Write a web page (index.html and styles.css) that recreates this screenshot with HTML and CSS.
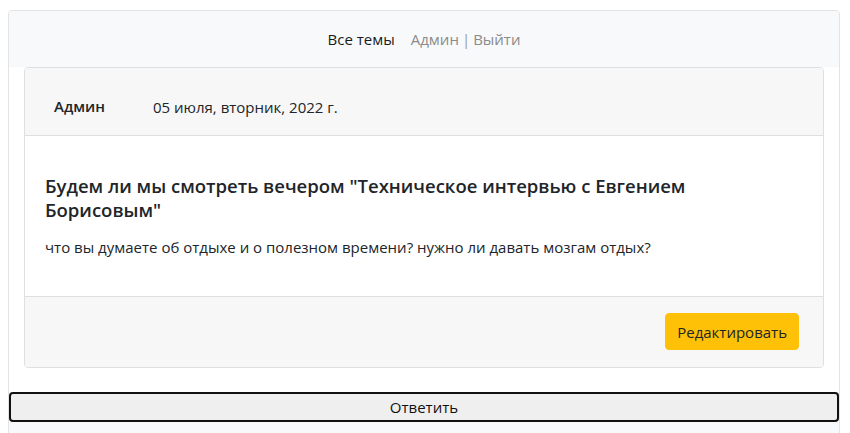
FILE: index.html
```html
<!DOCTYPE html>
<html lang="ru">
<head>
<meta charset="utf-8">
<title>Тема</title>
<link rel="stylesheet" href="styles.css">
</head>
<body>
<div class="page">
  <nav class="navbar">
    <a class="nav-link active" href="#">Все темы</a>
    <span class="nav-user"><a class="nav-link" href="#">Админ</a><span class="sep">|</span><a class="nav-link" href="#">Выйти</a></span>
  </nav>
  <div class="content">
    <div class="card">
      <div class="card-header">
        <span class="author">Админ</span>
        <span class="date">05 июля, вторник, 2022 г.</span>
      </div>
      <div class="card-body">
        <h5 class="title">Будем ли мы смотреть вечером "Техническое интервью с Евгением Борисовым"</h5>
        <p class="text">что вы думаете об отдыхе и о полезном времени? нужно ли давать мозгам отдых?</p>
      </div>
      <div class="card-footer">
        <button class="btn-warning" type="button">Редактировать</button>
      </div>
    </div>
  </div>
  <button class="reply" type="button">Ответить</button>
  <div class="reply-area"></div>
</div>
</body>
</html>
```
FILE: styles.css
```css
* { box-sizing: border-box; }
html, body { margin: 0; padding: 0; background: #fff; }
body {
  font-family: "Open Sans", "Noto Sans", sans-serif;
  color: #212529;
  font-size: 15px;
  padding: 10px 10px 0 8px;
}
.page {
  border: 1px solid #e3e3e3;
  border-radius: 4px;
  background: #fff;
  overflow: hidden;
}
.navbar {
  background: #f8f9fa;
  height: 56px;
  display: flex;
  justify-content: center;
  align-items: center;
  gap: 16px;
  font-size: 15px;
}
.nav-link { text-decoration: none; color: #8a8b8c; }
.nav-link.active { color: #1b1b1b; }
.sep { color: #9a9a9a; margin: 0 3px; }
.content { padding: 0 15px; }
.card {
  border: 1px solid #dfdfdf;
  border-radius: 4px;
  overflow: hidden;
}
.card-header {
  background: #f7f7f7;
  border-bottom: 1px solid #dfdfdf;
  height: 68px;
  display: flex;
  align-items: center;
  padding: 8px 29px 0;
  gap: 48px;
}
.author { font-weight: 600; font-size: 15px; }
.date { font-size: 15px; margin-top: 2px; }
.card-body { padding: 38px 20px 0; height: 160px; }
.title { margin: 0 0 14px; font-size: 18.5px; font-weight: 600; line-height: 24px; }
.text { margin: 0; font-size: 15px; line-height: 22px; }
.card-footer {
  background: #f7f7f7;
  border-top: 1px solid #dfdfdf;
  display: flex;
  justify-content: flex-end;
  padding: 16px 24px 17px;
}
.btn-warning {
  background: #ffc107;
  border: 1px solid #ffc107;
  border-radius: 4px;
  color: #212529;
  font-family: inherit;
  font-size: 15px;
  height: 37px;
  padding: 0 11px;
}
.reply {
  display: block;
  width: 100%;
  margin-top: 24px;
  height: 30px;
  border: 2px solid #111;
  border-radius: 4px;
  background: #efefef;
  font-family: inherit;
  font-size: 15px;
  color: #111;
}
.reply-area { height: 40px; background: #f8f9fa; }
```
